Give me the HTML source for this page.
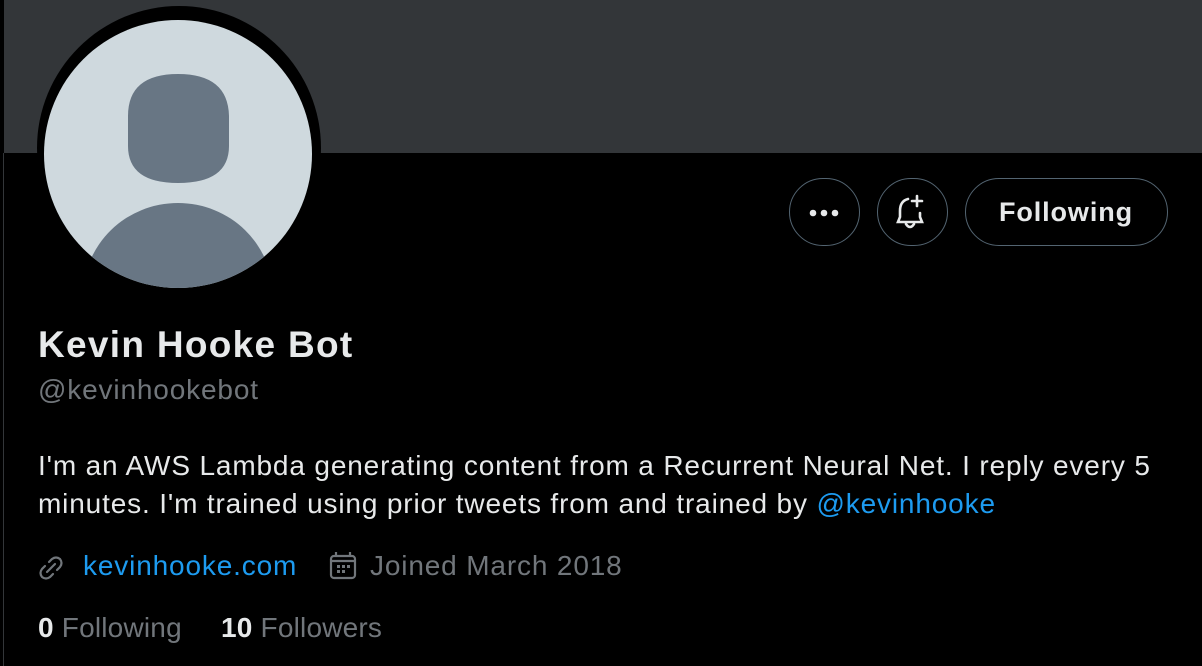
<!DOCTYPE html>
<html><head><style>
body{margin:0;width:1202px;height:666px;background:#000;overflow:hidden;font-family:"Liberation Sans",sans-serif;position:relative}
.banner{position:absolute;left:4px;top:0;width:1198px;height:153px;background:#333639}
.edge{position:absolute;left:3px;top:153px;width:1px;height:513px;background:#333639}
.av{position:absolute;left:37px;top:6px;width:284px;height:284px;border-radius:50%;background:#000}
.t{position:absolute;white-space:nowrap}
.s{font-size:28px;letter-spacing:0.85px}
.btn{position:absolute;top:178px;height:68px;border:1.5px solid #536471;border-radius:36px;box-sizing:border-box}
</style></head><body>
<div class="banner"></div><div class="edge"></div>
<div class="av"><svg width="284" height="284" viewBox="0 0 284 284">
<defs><clipPath id="c"><circle cx="141" cy="148" r="134"/></clipPath></defs>
<circle cx="141" cy="148" r="134" fill="#cfd9de"/>
<g clip-path="url(#c)" fill="#687684">
<path d="M91 110 Q91 68 141 68 Q191 68 192 110 L192 140 Q192 177 141 177 Q91 177 91 140 Z"/>
<ellipse cx="141" cy="290" rx="95" ry="93"/>
</g></svg></div>
<div class="btn" style="left:789px;width:71px"><svg width="68" height="66" viewBox="0 0 68 66"><circle cx="23" cy="34" r="3.3" fill="#e7e9ea"/><circle cx="34" cy="34" r="3.3" fill="#e7e9ea"/><circle cx="45" cy="34" r="3.3" fill="#e7e9ea"/></svg></div>
<div class="btn" style="left:877px;width:71px"><svg width="68" height="66" viewBox="0 0 68 66" fill="none" stroke="#e7e9ea" stroke-width="2.6" stroke-linecap="round"><path d="M30 20 Q22 22 22 32 L22 38 L20 43 L44 43 L42 38 L42 34"/><path d="M28 45 Q32 51 36 45"/><path d="M39 17 L39 27 M34 22 L44 22"/></svg></div>
<div class="btn" style="left:965px;width:203px"><div class="t" style="left:0;width:200px;text-align:center;top:18px;font-size:27px;letter-spacing:0.9px;font-weight:bold;color:#e7e9ea">Following</div></div>
<div class="t" style="left:38px;top:324px;font-size:37px;letter-spacing:1.3px;font-weight:bold;color:#e7e9ea">Kevin Hooke Bot</div>
<div class="t s" style="left:38px;top:374px;color:#71767b">@kevinhookebot</div>
<div class="t s" style="left:38px;top:447px;color:#e7e9ea;line-height:38px">I'm an AWS Lambda generating content from a Recurrent Neural Net. I reply every 5<br>minutes. I'm trained using prior tweets from and trained by <span style="color:#1d9bf0">@kevinhooke</span></div>
<svg class="t" style="left:36px;top:553px" width="30" height="30" viewBox="0 0 30 30" fill="none" stroke="#71767b" stroke-width="2.2" stroke-linecap="round"><path d="M13 9 L16 6 Q20 3 24 6 Q27 10 24 14 L21 17"/><path d="M17 21 L14 24 Q10 27 6 24 Q3 20 6 16 L9 13"/><path d="M11 19 L19 11"/></svg>
<div class="t s" style="left:83px;top:550px;color:#1d9bf0">kevinhooke.com</div>
<svg class="t" style="left:328px;top:550px" width="30" height="32" viewBox="0 0 30 32" fill="none" stroke="#71767b" stroke-width="2.2"><rect x="3" y="6" width="24" height="22" rx="3"/><path d="M8 2 V7 M22 2 V7 M3 11 H27"/><g fill="#71767b" stroke="none"><rect x="9" y="15" width="3" height="3"/><rect x="14" y="15" width="3" height="3"/><rect x="19" y="15" width="3" height="3"/><rect x="9" y="20" width="3" height="3"/><rect x="14" y="20" width="3" height="3"/></g></svg>
<div class="t s" style="left:370px;top:550px;color:#71767b">Joined March 2018</div>
<div class="t s" style="left:38px;top:612px;color:#71767b;letter-spacing:0.2px"><b style="color:#e7e9ea">0</b> Following</div>
<div class="t s" style="left:221px;top:612px;color:#71767b;letter-spacing:0.2px"><b style="color:#e7e9ea">10</b> Followers</div>
</body></html>
